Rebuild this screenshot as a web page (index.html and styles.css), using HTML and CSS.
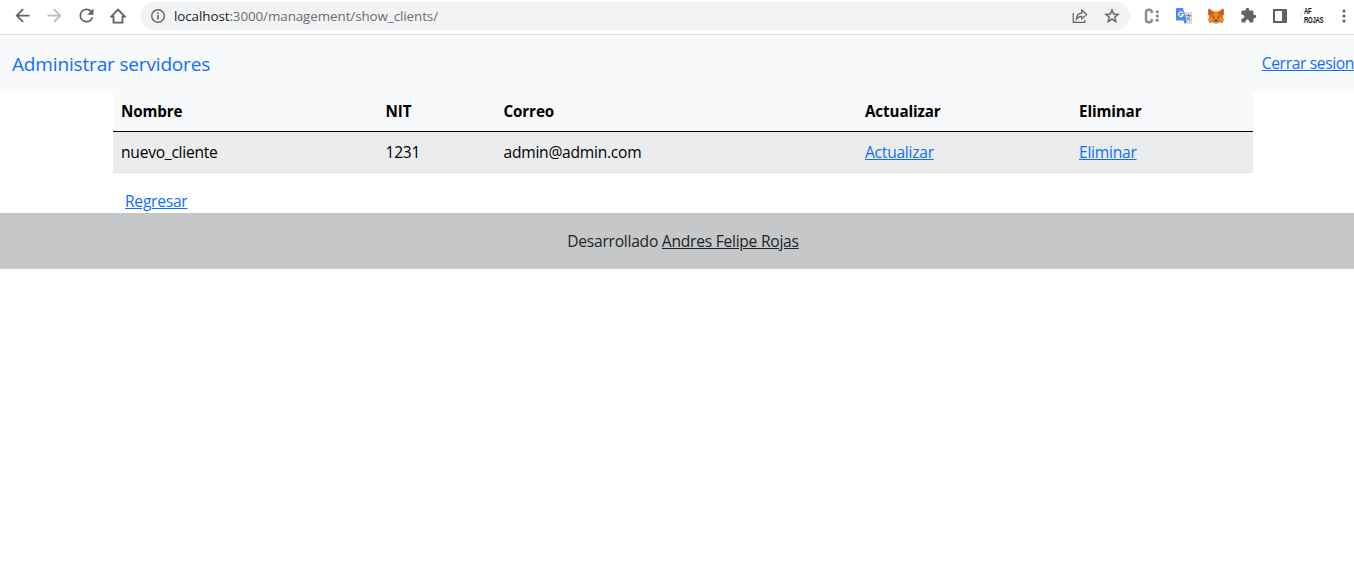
FILE: index.html
```html
<!DOCTYPE html>
<html lang="es">
<head>
<meta charset="utf-8">
<title>Administrar servidores</title>
<link rel="stylesheet" href="styles.css">
</head>
<body>
<header class="toolbar">
  <div class="slot"><svg class="icon" width="21" height="21" viewBox="0 0 24 24"><path d="M20 11H7.83l5.59-5.59L12 4l-8 8 8 8 1.41-1.41L7.83 13H20v-2z"/></svg></div>
  <div class="slot"><svg class="icon faded" width="21" height="21" viewBox="0 0 24 24"><path d="M4 11h12.17l-5.59-5.59L12 4l8 8-8 8-1.41-1.41L16.17 13H4v-2z"/></svg></div>
  <div class="slot"><svg class="icon" width="21" height="21" viewBox="0 0 24 24"><path d="M17.65 6.35A7.96 7.96 0 0 0 12 4a8 8 0 1 0 7.73 10h-2.08A6 6 0 1 1 12 6c1.66 0 3.14.69 4.22 1.78L13 11h7V4l-2.35 2.35z"/></svg></div>
  <div class="slot"><svg width="16" height="16" viewBox="0 0 16 16" fill="none" stroke="#5f6368" stroke-width="1.8"><path d="M1.2 8.6 8 1.6l6.8 7H12.5v6h-9v-6z"/></svg></div>
  <div class="address">
    <svg width="16" height="16" viewBox="0 0 16 16"><circle cx="8" cy="8" r="6.3" fill="none" stroke="#5f6368" stroke-width="1.4"/><path fill="#5f6368" d="M7.2 7h1.6v4.4H7.2zM7.2 4.4h1.6V6H7.2z"/></svg>
    <span class="url"><span class="host">localhost</span>:3000/management/show_clients/</span>
    <div class="slot"><svg width="16" height="16" viewBox="0 0 16 16" fill="none" stroke="#5f6368" stroke-width="1.2"><path d="M1.2 5v9.4h11.6v-2.6M4.3 11.2c.3-3.8 2.2-5.8 5.4-6V2.2l5 4.4-5 4.4V8.4c-2.4 0-4 .8-5.400 2.800z"/></svg></div>
    <div class="slot"><svg width="18" height="18" viewBox="0 0 24 24" fill="#5f6368" stroke="#5f6368" stroke-width=".4"><path d="m22 9.24-7.19-.62L12 2 9.19 8.63 2 9.24l5.46 4.73L5.82 21 12 17.27 18.18 21l-1.63-7.03L22 9.24zM12 15.4l-3.76 2.27 1-4.28-3.32-2.88 4.38-.38L12 6.1l1.71 4.04 4.38.38-3.32 2.88 1 4.28L12 15.4z"/></svg></div>
  </div>
  <div class="slot ext"><svg width="16" height="16" viewBox="0 0 16 16"><path d="M7.7 5V4Q7.7 1.7 5.2 1.7H4.500Q2 1.700 2 4.200v7.600q0 2.500 2.500 2.500h.7q2.500 0 2.500-2.300v-1" fill="none" stroke="#8c8c8c" stroke-width="2.5"/><g fill="#8c8c8c"><circle cx="13.3" cy="3.8" r="1.6"/><circle cx="13.3" cy="8" r="1.6"/><circle cx="13.3" cy="12.2" r="1.6"/></g></svg></div>
  <div class="slot"><svg width="16" height="16" viewBox="0 0 16 16"><path fill="#d8dadd" d="M6 4h9q1 0 1 1v10q0 1-1 1H9z"/><path fill="#3a63c4" d="m7.5 12.5 3.2 0L9 16z"/><path fill="#4c8bf5" d="M1 0h6l3.7 12.5H1q-1 0-1-1V1q0-1 1-1z"/><path d="M7 5.200A2.300 2.300 0 1 0 7.200 6.600H5.200" fill="none" stroke="#fff" stroke-width="1.2"/><path d="M10 7.5h5M12.500 6v1.500M14 7.500q-.8 3-3 4.600M11 8.800q1 2.200 3.200 3.400" fill="none" stroke="#7a8794" stroke-width="1"/></svg></div>
  <div class="slot"><svg width="16" height="16" viewBox="0 0 16 16"><path fill="#e2761b" d="m.6.6 5.2 2.800h4.400L15.400.6l.5 5-1 3.400 1 3-1.400 3-3-.8-1.700 1.200H6.200l-1.700-1.200-3 .8L.1 12l1-3-1-3.400z"/><path fill="#c65d1d" d="m.6.6 5.2 4L5 7.200l-4.900-.8zM15.400.6l-5.200 4 .8 2.600 4.900-.8z"/><path fill="#f08b2d" d="M5.800 3.400h4.400L9.500 9h-3zM.5 11l4-2.500.5 3.500-3.500 2.800zM15.500 11l-4-2.500-.5 3.500 3.500 2.800z"/><path fill="#26333f" d="m4 8.200 2.200 1-.4 1zM12 8.200l-2.200 1 .4 1zM6.600 12.300h2.800l.3 1.400H6.300z"/><path fill="#cabdb0" d="M6.200 13.700h3.600v1.100L9 15.500H7l-.8-.7z"/></svg></div>
  <div class="slot"><svg width="17" height="17" viewBox="0 0 24 24" fill="#5f6368"><path d="M20.500 11H19V7c0-1.100-.9-2-2-2h-4V3.500a2.500 2.500 0 0 0-5 0V5H4c-1.100 0-1.990.9-1.990 2v3.800H3.500c1.490 0 2.700 1.210 2.700 2.700s-1.210 2.700-2.700 2.700H2V20c0 1.100.9 2 2 2h3.800v-1.500c0-1.490 1.210-2.700 2.700-2.700s2.700 1.210 2.700 2.700V22H17c1.100 0 2-.9 2-2v-4h1.500a2.500 2.500 0 0 0 0-5z"/></svg></div>
  <div class="slot"><svg width="14" height="14" viewBox="0 0 14 14"><path fill="#5f6368" fill-rule="evenodd" d="M0 0h14v14H0zM2 2v10h7V2z"/></svg></div>
  <div class="avatar"><span>AF</span><span>ROJAS</span></div>
  <svg class="dots" width="4" height="14" viewBox="0 0 4 14" fill="#5f6368"><circle cx="2" cy="2" r="1.6"/><circle cx="2" cy="7" r="1.6"/><circle cx="2" cy="12" r="1.6"/></svg>
</header>
<nav class="navbar">
  <a class="brand">Administrar servidores</a>
  <a class="link logout">Cerrar sesion</a>
</nav>
<main class="container">
  <table class="clients">
    <colgroup><col class="c-name"><col class="c-nit"><col class="c-mail"><col class="c-update"><col></colgroup>
    <thead><tr><th>Nombre</th><th>NIT</th><th>Correo</th><th>Actualizar</th><th>Eliminar</th></tr></thead>
    <tbody><tr><td>nuevo_cliente</td><td>1231</td><td>admin@admin.com</td><td><a class="link">Actualizar</a></td><td><a class="link">Eliminar</a></td></tr></tbody>
  </table>
  <div class="back"><a class="link">Regresar</a></div>
</main>
<footer class="footer"><span>Desarrollado <a class="author">Andres Felipe Rojas</a></span></footer>
</body>
</html>
```
FILE: styles.css
```css
* { box-sizing: border-box; }
body {
  margin: 0;
  background: #fff;
  color: #212529;
  font: 15.6px/24px "Open Sans", "Noto Sans", sans-serif;
  letter-spacing: -0.25px;
  overflow: hidden;
}
.toolbar {
  display: flex;
  align-items: center;
  height: 35px;
  padding: 0 0 3px 6px;
  border-bottom: 1px solid #dadce0;
}
.slot {
  display: flex;
  flex: none;
  width: 32px;
  align-items: center;
  justify-content: center;
}
.icon { fill: #5f6368; }
.faded { fill: #babcbe; }
.address {
  display: flex;
  align-items: center;
  width: 990px;
  height: 28px;
  margin-left: 6px;
  padding: 0 2px 0 10px;
  border-radius: 14px;
  background: #f1f3f4;
}
.url {
  flex: 1;
  margin-left: 8px;
  color: #6b6e72;
  font-size: 13.4px;
  letter-spacing: -0.08px;
}
.host { color: #202124; }
.ext { margin-left: 6px; }
.avatar {
  display: flex;
  flex-direction: column;
  width: 22px;
  height: 22px;
  margin-left: 5px;
  padding: 2px 0 0 2px;
  border-left: 1px solid #d5eeee;
  border-radius: 11px;
  color: #111;
  font: bold 9px/9px "Liberation Sans", sans-serif;
  letter-spacing: -0.4px;
}
.avatar span {
  width: max-content;
  transform: scaleX(0.66);
  transform-origin: left;
}
.dots { margin-left: 19px; }
.navbar {
  display: flex;
  align-items: center;
  justify-content: space-between;
  height: 56px;
  padding-left: 12px;
  background: #f8f9fa;
}
.brand {
  padding-top: 2px;
  color: #0d6efd;
  font-size: 19px;
  line-height: 30px;
  letter-spacing: -0.16px;
}
.logout { letter-spacing: -0.36px; }
.link {
  color: #0d6efd;
  text-decoration: underline;
}
.container {
  width: 1140px;
  margin-left: 113px;
}
.clients {
  width: 100%;
  table-layout: fixed;
  border-collapse: separate;
  border-spacing: 0;
  color: #000;
}
.clients th,
.clients td {
  height: 41px;
  padding: 8px;
  text-align: left;
}
.clients th {
  background: #f8f9fa;
  border-bottom: 1px solid #000;
  font-size: 15.2px;
  letter-spacing: -0.12px;
}
.clients td {
  background: #ebecee;
  border-bottom: 1px solid #dfe0e1;
}
.c-name { width: 264.5px; }
.c-nit { width: 118px; }
.c-mail { width: 361.5px; }
.c-update { width: 214px; }
.back {
  height: 40px;
  padding: 16px 12px 0;
}
.footer {
  display: flex;
  align-items: center;
  justify-content: center;
  height: 56px;
  padding-left: 12px;
  background: #c6c7c8;
}
.author {
  color: #212529;
  text-decoration: underline;
}
```
